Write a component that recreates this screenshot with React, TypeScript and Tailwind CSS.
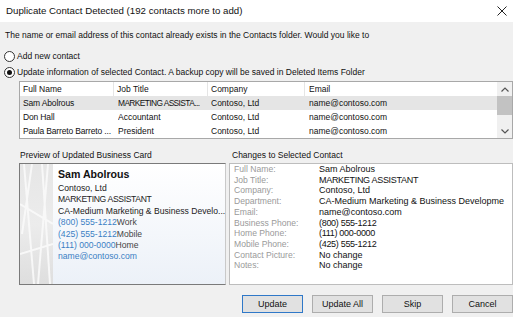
import React from 'react';

const rows = [
  { name: 'Sam Abolrous', job: 'MARKETING ASSISTA...', company: 'Contoso, Ltd', email: 'name@contoso.com', selected: true },
  { name: 'Don Hall', job: 'Accountant', company: 'Contoso, Ltd', email: 'name@contoso.com' },
  { name: 'Paula Barreto Barreto ...', job: 'President', company: 'Contoso, Ltd', email: 'name@contoso.com' },
];

const changes: [string, string][] = [
  ['Full Name:', 'Sam Abolrous'],
  ['Job Title:', 'MARKETING ASSISTANT'],
  ['Company:', 'Contoso, Ltd'],
  ['Department:', 'CA-Medium Marketing & Business Developme'],
  ['Email:', 'name@contoso.com'],
  ['Business Phone:', '(800) 555-1212'],
  ['Home Phone:', '(111) 000-0000'],
  ['Mobile Phone:', '(425) 555-1212'],
  ['Contact Picture:', 'No change'],
  ['Notes:', 'No change'],
];

function Radio({ checked, children }: { checked?: boolean; children: React.ReactNode }) {
  return (
    <div className="flex items-center h-[16px] pl-[4px] whitespace-nowrap">
      <span className="w-[11px] h-[11px] rounded-full border border-[#333] bg-white flex items-center justify-center mr-[2px] shrink-0">
        {checked && <span className="w-[5px] h-[5px] rounded-full bg-[#111]" />}
      </span>
      <span>{children}</span>
    </div>
  );
}

function Cells({ cols, className }: { cols: string[]; className?: string }) {
  return (
    <div className={'flex h-[14px] items-center whitespace-nowrap ' + (className ?? '')}>
      <div className="w-[98px] pl-[3px] overflow-hidden tracking-[-0.15px]">{cols[0]}</div>
      <div className={'w-[93px] overflow-hidden ' + (cols[1] === cols[1].toUpperCase() ? 'text-[8.4px] tracking-[-0.6px]' : '')}>{cols[1]}</div>
      <div className="w-[98px] overflow-hidden">{cols[2]}</div>
      <div className="flex-1 overflow-hidden">{cols[3]}</div>
    </div>
  );
}

function Button({ label, primary }: { label: string; primary?: boolean }) {
  return (
    <div
      className={
        'h-[18px] w-[61px] flex items-center justify-center bg-[#e1e1e1] border ' +
        (primary ? 'border-[#2f78c8]' : 'border-[#adadad]')
      }
    >
      {label}
    </div>
  );
}

export default function App() {
  return (
    <div className="w-[513px] h-[317px] overflow-hidden bg-[#f0f0f0] text-[8.5px] leading-[14px] text-[#111] font-['Liberation_Sans',Arial,sans-serif]">
      {/* title bar */}
      <div className="h-[22px] bg-white flex items-center justify-between pl-[6px] pr-[3px]">
        <span className="text-[9.7px]">Duplicate Contact Detected (192 contacts more to add)</span>
        <svg width="10" height="10" viewBox="0 0 10 10" className="mr-[3px]">
          <path d="M0.5 0.5 L9.5 9.5 M9.5 0.5 L0.5 9.5" stroke="#222" strokeWidth="1" />
        </svg>
      </div>

      <div className="pt-[6px] pl-[5px] h-[20px] whitespace-nowrap">
        The name or email address of this contact already exists in the Contacts folder. Would you like to
      </div>
      <div className="mt-[6px]">
        <Radio>Add new contact</Radio>
      </div>
      <Radio checked>Update information of selected Contact. A backup copy will be saved in Deleted Items Folder</Radio>

      {/* table */}
      <div className="ml-[19px] mt-[1px] w-[494px] h-[58px] border border-[#a8a8a8] bg-white flex">
        <div className="flex-1 min-w-0">
          <div className="flex h-[14px] items-center">
            <div className="w-[94px] pl-[3px] border-r border-[#e5e5e5] h-full flex items-center">Full Name</div>
            <div className="w-[94px] pl-[3px] border-r border-[#e5e5e5] h-full flex items-center">Job Title</div>
            <div className="w-[97px] pl-[3px] border-r border-[#e5e5e5] h-full flex items-center">Company</div>
            <div className="flex-1 pl-[4px]">Email</div>
          </div>
          {rows.map((r) => (
            <Cells
              key={r.name}
              cols={[r.name, r.job, r.company, r.email]}
              className={r.selected ? 'bg-[#e5e5e5]' : ''}
            />
          ))}
        </div>
        <div className="w-[15px] bg-[#f0f0f0] flex flex-col items-center">
          <div className="h-[14px] flex items-center">
            <svg width="8" height="5" viewBox="0 0 8 5">
              <path d="M0.5 4.5 L4 1 L7.5 4.5" stroke="#555" fill="none" strokeWidth="1.2" />
            </svg>
          </div>
          <div className="w-[15px] h-[19px] bg-[#c2c2c2]" />
          <div className="flex-1" />
          <div className="h-[14px] flex items-center">
            <svg width="8" height="5" viewBox="0 0 8 5">
              <path d="M0.5 0.5 L4 4 L7.5 0.5" stroke="#555" fill="none" strokeWidth="1.2" />
            </svg>
          </div>
        </div>
      </div>

      {/* panels */}
      <div className="flex mt-[9px]">
        <div className="ml-[19px] w-[207px]">
          <div className="h-[15px] pl-[1px]">Preview of Updated Business Card</div>
          <div className="h-[122px] flex border-l border-t border-b border-[#7a7a7a] border-r-[#c9c9c9] border-r bg-gradient-to-b from-white to-[#ecf1f8]">
            <div className="w-[33px] h-full bg-gradient-to-b from-[#e6e6e6] via-[#ececec] to-[#dedede] overflow-hidden shrink-0">
              <svg width="33" height="120" viewBox="0 0 33 120">
                <path d="M4 0 L14 120 M12 0 L2 70 M22 0 L30 120 M0 40 L33 60 M0 90 L33 80 M28 0 L18 120" stroke="#fafafa" strokeWidth="2" fill="none" opacity="0.9" />
              </svg>
            </div>
            <div className="pl-[5px] pt-[2px] text-[8.6px] leading-[11.4px] text-[#222] whitespace-nowrap">
              <div className="font-bold text-[10.6px] leading-[16px] text-[#111]">Sam Abolrous</div>
              <div className="mt-[1px]">Contoso, Ltd</div>
              <div className="tracking-[-0.35px]">MARKETING ASSISTANT</div>
              <div>CA-Medium Marketing &amp; Business Develo...</div>
              <div><span className="text-[#3b7fc4]">(800) 555-1212</span><span className="text-[#444]">Work</span></div>
              <div><span className="text-[#3b7fc4]">(425) 555-1212</span><span className="text-[#444]">Mobile</span></div>
              <div><span className="text-[#3b7fc4]">(111) 000-0000</span><span className="text-[#444]">Home</span></div>
              <div className="text-[#3b7fc4]">name@contoso.com</div>
            </div>
          </div>
        </div>
        <div className="ml-[3px] w-[284px]">
          <div className="h-[15px] pl-[3px]">Changes to Selected Contact</div>
          <div className="h-[122px] border border-[#bdbdbd] bg-white text-[9px] leading-[10.7px] whitespace-nowrap">
            {changes.map(([k, v]) => (
              <div key={k} className="flex">
                <div className="w-[89px] pl-[4px] text-[#9a9a9a] text-[8.6px]">{k}</div>
                <div className={v === v.toUpperCase() ? 'tracking-[-0.3px]' : ''}>{v}</div>
              </div>
            ))}
          </div>
        </div>
      </div>

      {/* buttons */}
      <div className="flex justify-end gap-[9px] mt-[10px] text-[9px]">
        <Button label="Update" primary />
        <Button label="Update All" />
        <Button label="Skip" />
        <Button label="Cancel" />
      </div>
    </div>
  );
}
